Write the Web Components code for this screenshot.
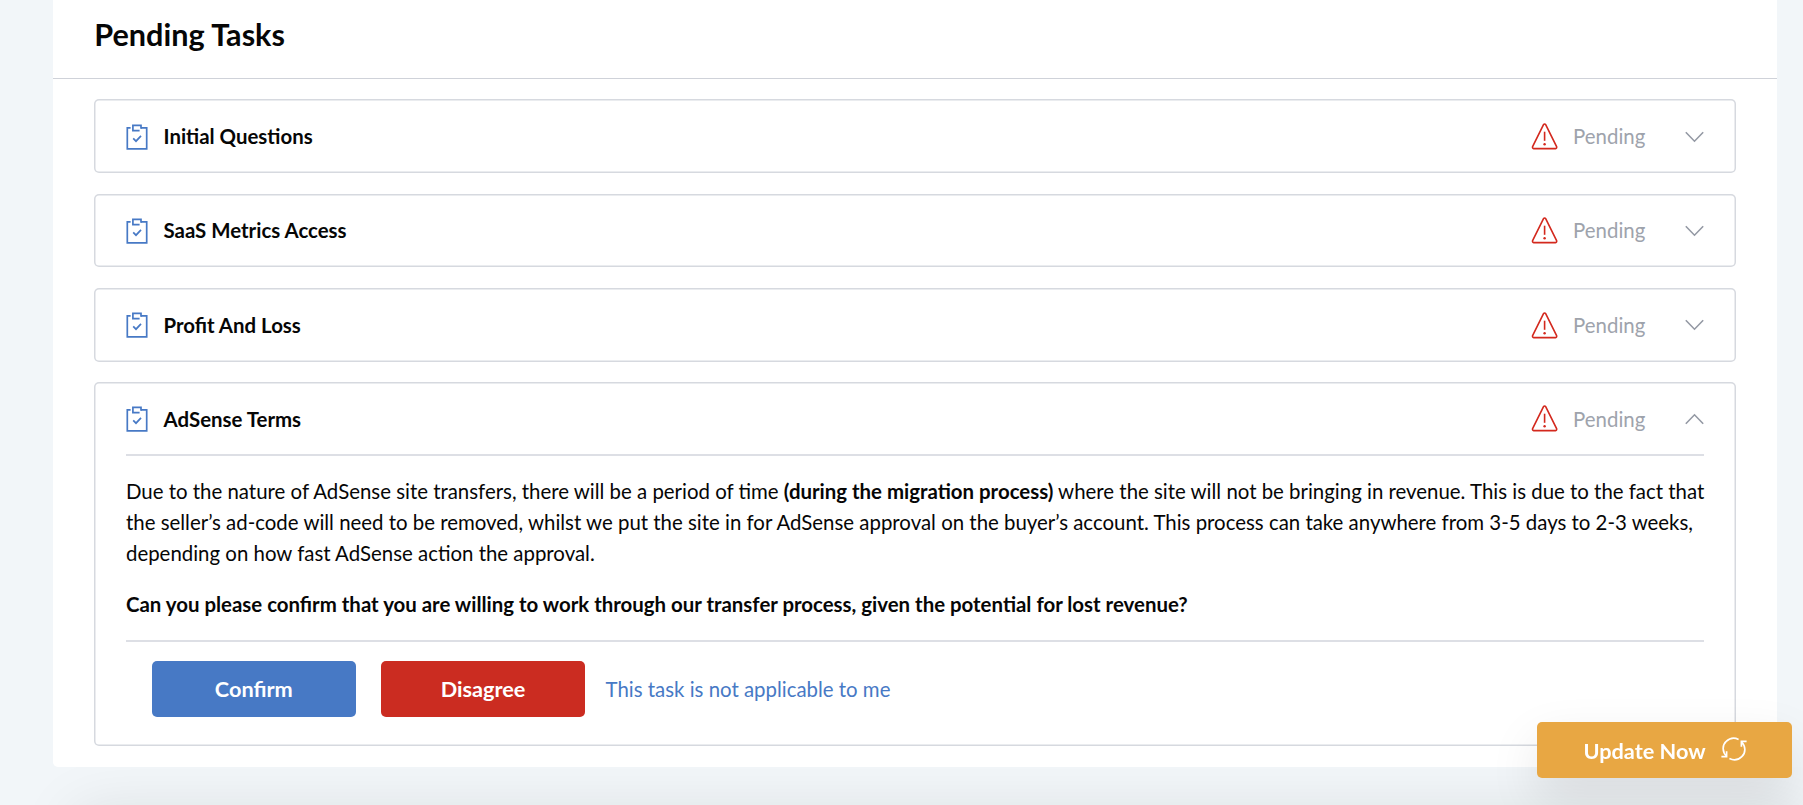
<!DOCTYPE html>
<html lang="en">
<head>
<meta charset="UTF-8">
<title>Pending Tasks</title>
<style>
    :root {
        --text-color: #060606;
        --muted-color: #9ea3ac;
        --border-color: #d6d9df;
        --divider-color: #dddfe5;
        --primary-color: #4779c5;
        --danger-color: #cb2c21;
        --warning-color: #e8a743;
        --page-color: #f2f6f9;
        --white: #fff;
    }
    html, body {
        margin: 0;
        height: 805px;
        overflow: hidden;
    }
    body {
        background: var(--page-color);
        color: var(--text-color);
        font-family: Lato, "Liberation Sans", sans-serif;
        font-size: 20.41px;
        line-height: 30.65px;
    }
    p {
        margin: 0 -3px 20.4px 0;
    }
</style>
</head>
<body>
<task-panel heading="Pending Tasks">
    <task-card label="Initial Questions" status="Pending"></task-card>
    <task-card label="SaaS Metrics Access" status="Pending"></task-card>
    <task-card label="Profit And Loss" status="Pending"></task-card>
    <task-card label="AdSense Terms" status="Pending" open>
        <p>Due to the nature of AdSense site transfers, there will be a period of time <b>(during the migration process)</b> where the site will not be bringing in revenue. This is due to the fact that the seller’s ad-code will need to be removed, whilst we put the site in for AdSense approval on the buyer’s account. This process can take anywhere from 3-5 days to 2-3 weeks, depending on how fast AdSense action the approval.</p>
        <p><b>Can you please confirm that you are willing to work through our transfer process, given the potential for lost revenue?</b></p>
        <task-button slot="actions">Confirm</task-button>
        <task-button slot="actions" variant="danger">Disagree</task-button>
        <task-link slot="actions">This task is not applicable to me</task-link>
    </task-card>
</task-panel>
<page-footer></page-footer>
<update-button>Update Now</update-button>

<script>
const icons = {
    clipboard: `<svg width="22" height="26" viewBox="0 0 22 26" fill="none" stroke="#4779c5" stroke-width="1.7">
        <path d="M4.6 3.9H1.3V24.8H20.7V3.9H15"/>
        <path d="M15 4.7V1.3H6.9V6.6H13.6"/>
        <path d="M7.2 14.4L10 17.2L15 11.9"/>
    </svg>`,
    warning: `<svg width="27" height="27" viewBox="0 0 27 27" fill="none" stroke="#d3281d" stroke-width="1.6" stroke-linejoin="round">
        <path d="M12.4 1.8Q13.6 .2 14.8 1.8L25.6 23.6Q26.1 25.3 24.5 25.6H2.7Q1.1 25.3 1.6 23.6Z"/>
        <path d="M13.6 8.7V17.8"/>
        <circle cx="13.6" cy="21.2" r="1.2" fill="#d3281d" stroke="none"/>
    </svg>`,
    chevron: `<svg class="chevron" width="19" height="12" viewBox="0 0 19 12" fill="none" stroke="#9499a4" stroke-width="1.6">
        <path d="M.8 1.2L9.5 10.2L18.2 1.2"/>
    </svg>`,
    refresh: `<svg width="26" height="24" viewBox="0 0 26 24" fill="none" stroke="#fff" stroke-width="1.7">
        <path d="M5.6 19.2C1.2 15 1 8.2 5.2 4.4C8.6 1.1 13.4.4 17.6 2.4"/>
        <path d="M.4 19.7H5.6V14.2"/>
        <path d="M20.4 4.8C24.8 9 25 15.8 20.8 19.6C17.4 22.9 12.6 23.6 8.4 21.6"/>
        <path d="M25.6 4.3H20.4V9.8"/>
    </svg>`
};

class TaskPanel extends HTMLElement {
    constructor() {
        super();
        const shadow = this.attachShadow({ mode: 'open' });
        shadow.innerHTML = `
            <style>
                :host {
                    display: block;
                    box-sizing: border-box;
                    width: 1724px;
                    height: 767px;
                    margin-left: 53px;
                    background: var(--white);
                    border-radius: 0 0 5px 5px;
                }
                header {
                    box-sizing: border-box;
                    height: 79px;
                    padding: 15px 41px 0 41.3px;
                    border-bottom: 1.5px solid #cfd2d9;
                }
                h1 {
                    margin: 0;
                    font-size: 30.6px;
                    line-height: 40px;
                    font-weight: 700;
                }
                .list {
                    display: flex;
                    flex-direction: column;
                    gap: 20.4px;
                    padding: 20.3px 41px 0 41.3px;
                }
            </style>
            <header><h1>${this.getAttribute('heading')}</h1></header>
            <div class="list"><slot></slot></div>
        `;
    }
}

class TaskCard extends HTMLElement {
    constructor() {
        super();
        const shadow = this.attachShadow({ mode: 'open' });
        const open = this.hasAttribute('open');
        shadow.innerHTML = `
            <style>
                :host {
                    display: block;
                    box-sizing: border-box;
                    padding: 0 31.7px;
                    border-radius: 5px;
                    box-shadow: inset 0 0 0 1.5px var(--border-color);
                }
                .head {
                    display: flex;
                    align-items: center;
                    box-sizing: border-box;
                    height: 73.9px;
                    padding-top: .6px;
                }
                :host([open]) .head {
                    border-bottom: 2px solid var(--divider-color);
                    padding-top: 1.6px;
                }
                svg {
                    display: block;
                    flex: none;
                }
                .label {
                    flex: 1;
                    margin-left: 15.5px;
                    font-weight: 700;
                }
                .status {
                    margin: 0 40px 0 15px;
                    color: var(--muted-color);
                }
                :host([open]) .chevron {
                    transform: rotate(180deg);
                }
                .body {
                    padding-top: 20.4px;
                }
                .actions {
                    display: flex;
                    align-items: center;
                    height: 106.4px;
                    box-sizing: border-box;
                    padding: 0 0 10px 25.8px;
                    border-top: 2px solid var(--divider-color);
                }
            </style>
            <div class="head">
                ${icons.clipboard}
                <span class="label">${this.getAttribute('label')}</span>
                ${icons.warning}
                <span class="status">${this.getAttribute('status')}</span>
                ${icons.chevron}
            </div>
            ${open ? `
                <div class="body"><slot></slot></div>
                <div class="actions"><slot name="actions"></slot></div>
            ` : ''}
        `;
    }
}

class TaskButton extends HTMLElement {
    constructor() {
        super();
        const shadow = this.attachShadow({ mode: 'open' });
        shadow.innerHTML = `
            <style>
                :host {
                    display: block;
                    margin-right: 25.3px;
                }
                :host([variant="danger"]) {
                    margin-right: 20.5px;
                }
                button {
                    display: block;
                    width: 204px;
                    height: 56px;
                    padding: 0;
                    border: none;
                    border-radius: 5px;
                    background: var(--primary-color);
                    color: var(--white);
                    font: inherit;
                    font-size: 21.7px;
                    font-weight: 700;
                    cursor: pointer;
                }
                :host([variant="danger"]) button {
                    background: var(--danger-color);
                }
            </style>
            <button><slot></slot></button>
        `;
    }
}

class TaskLink extends HTMLElement {
    constructor() {
        super();
        const shadow = this.attachShadow({ mode: 'open' });
        shadow.innerHTML = `
            <style>
                :host {
                    display: block;
                    color: var(--primary-color);
                    cursor: pointer;
                }
            </style>
            <slot></slot>
        `;
    }
}

// Starts below the fold, only its shadow is visible
class PageFooter extends HTMLElement {
    constructor() {
        super();
        const shadow = this.attachShadow({ mode: 'open' });
        shadow.innerHTML = `
            <style>
                :host {
                    display: block;
                    height: 38px;
                    overflow: hidden;
                    position: relative;
                    z-index: -1;
                }
                div {
                    height: 80px;
                    margin: 44px 0 0 75px;
                    box-shadow: 0 0 60px rgba(20, 25, 20, 0.1);
                }
            </style>
            <div></div>
        `;
    }
}

class UpdateButton extends HTMLElement {
    constructor() {
        super();
        const shadow = this.attachShadow({ mode: 'open' });
        shadow.innerHTML = `
            <style>
                :host {
                    position: fixed;
                    right: 11px;
                    bottom: 27px;
                }
                button {
                    display: flex;
                    align-items: center;
                    box-sizing: border-box;
                    width: 255px;
                    height: 56px;
                    padding: 2px 0 0 46.5px;
                    border: none;
                    border-radius: 5px;
                    background: var(--warning-color);
                    color: var(--white);
                    font: inherit;
                    font-size: 21.7px;
                    font-weight: 700;
                    box-shadow: 0 20px 50px rgba(0, 0, 0, 0.1);
                    cursor: pointer;
                }
                svg {
                    margin: -5px 0 0 15px;
                }
            </style>
            <button><slot></slot>${icons.refresh}</button>
        `;
    }
}

customElements.define('task-panel', TaskPanel);
customElements.define('task-card', TaskCard);
customElements.define('task-button', TaskButton);
customElements.define('task-link', TaskLink);
customElements.define('page-footer', PageFooter);
customElements.define('update-button', UpdateButton);
</script>
</body>
</html>
